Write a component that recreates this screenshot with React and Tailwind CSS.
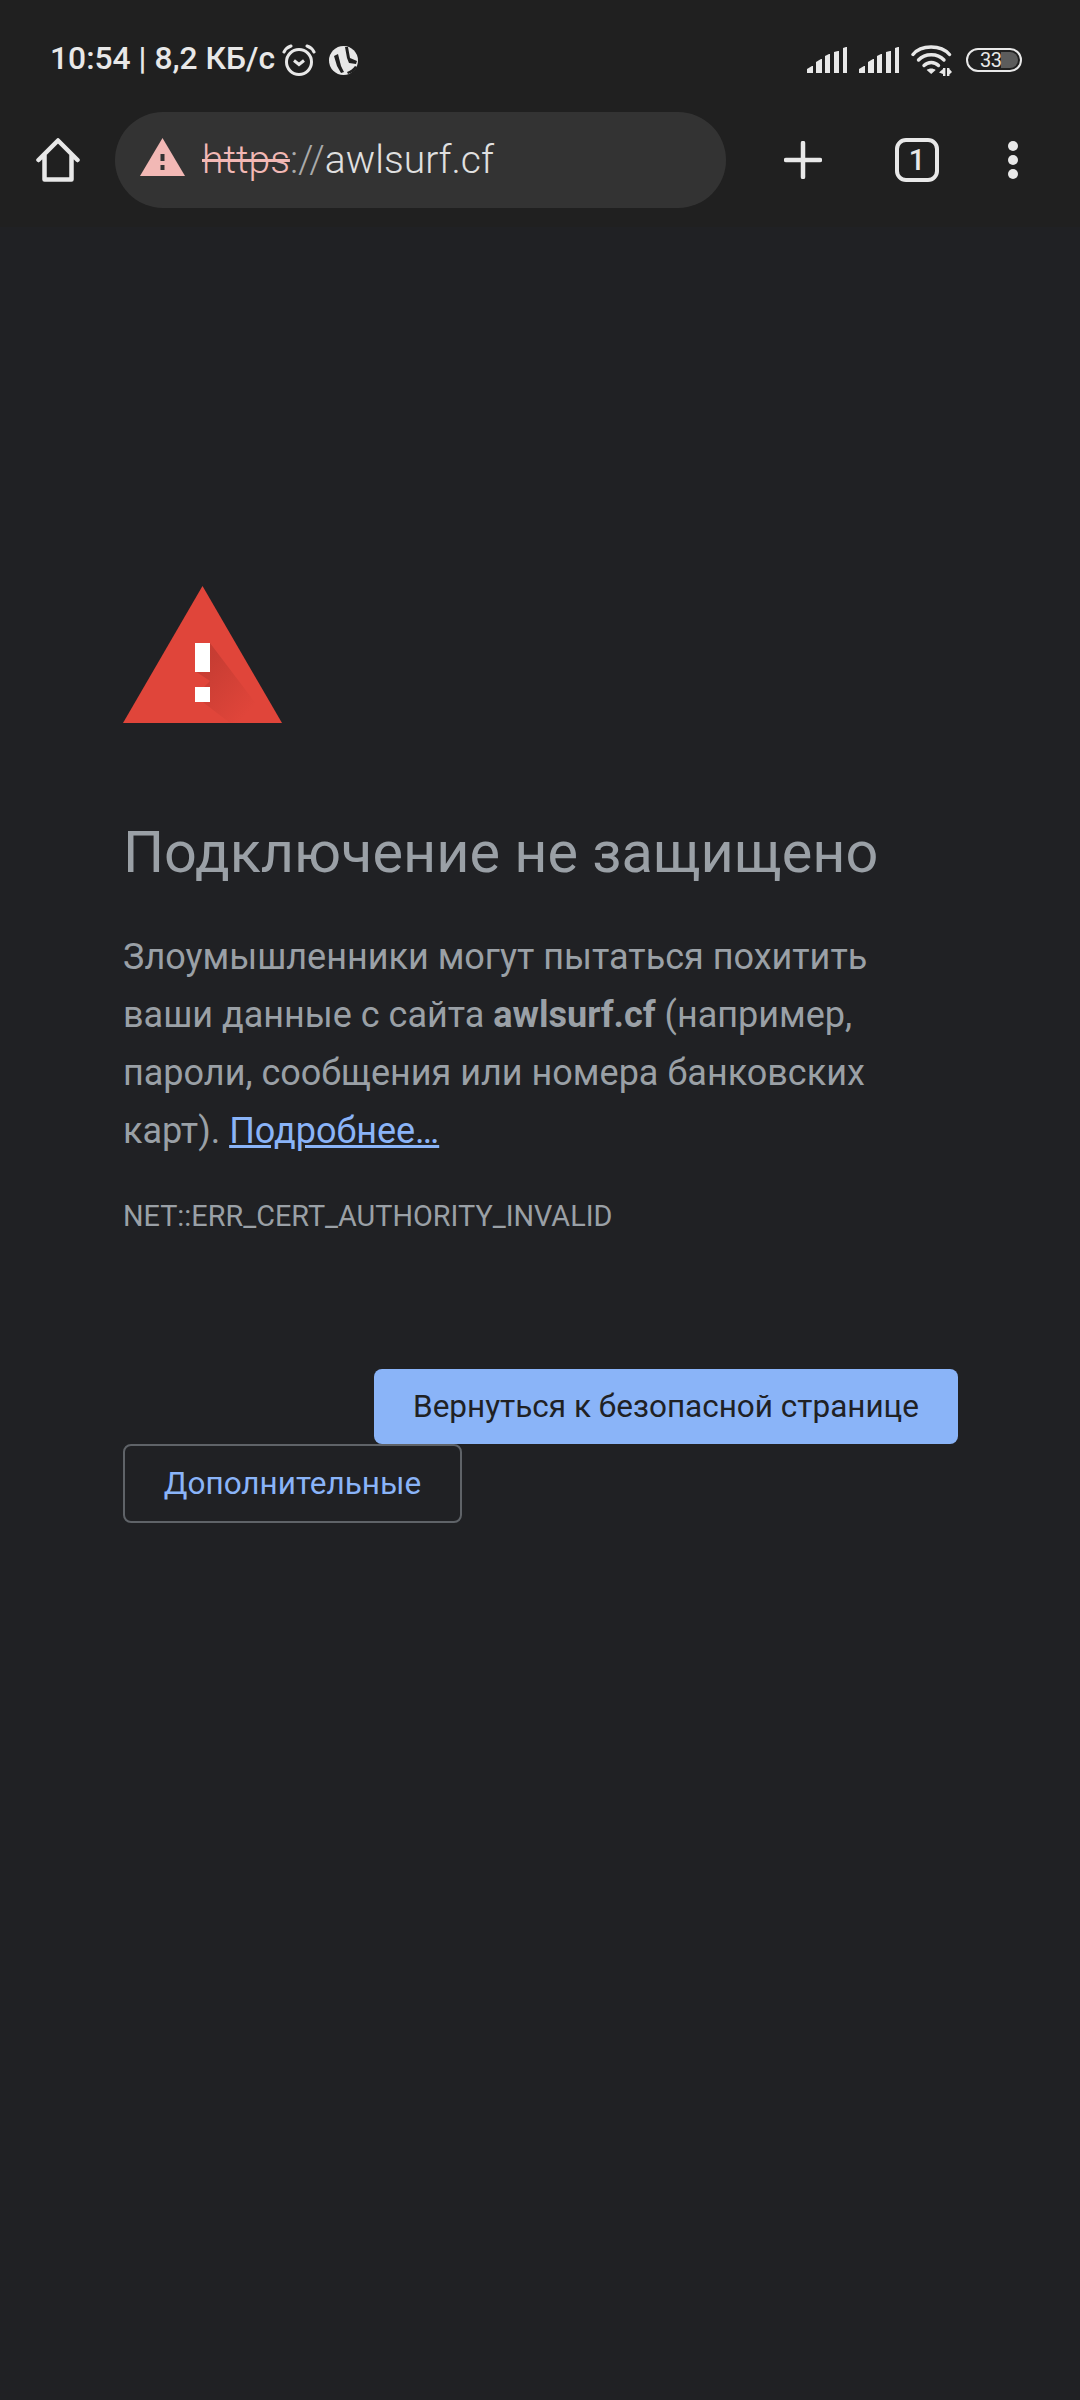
import React from "react";

const font = { fontFamily: "Roboto, sans-serif" };

function SignalIcon() {
  return (
    <svg width="40" height="26" viewBox="0 0 40 26" fill="#e8e8e8" className="block">
      <path d="M0 26v-4l5-3h1v7z" />
      <path d="M9 26V15l5-3h1v14z" />
      <path d="M18 26V9l4-2h1v19z" />
      <path d="M27 26V5l4-1h1v22z" />
      <path d="M36 26V1l3-1h1v26z" />
    </svg>
  );
}

function WifiIcon() {
  return (
    <svg width="41" height="31" viewBox="0 0 41 31" fill="none" className="block">
      <g stroke="#e8e8e8" strokeWidth="3.4" strokeLinecap="round">
        <path d="M2 9.5C10 -0.5 30 -0.5 38.5 9.5" />
        <path d="M7.5 15C14 8 26.5 8 33 15" />
        <path d="M13 20.5C17 16.5 23.5 16.5 27.5 20.5" />
      </g>
      <path d="M20.2 29l-4.5-4c2.5-2 6.5-2 9 0z" fill="#e8e8e8" />
      <path d="M32 23h2.4v8H32zM28 27.5l4-3.5v5zM36 23h2.4v8H36zM38.4 24l2.600 3-2.600 2.500z" fill="#e8e8e8" />
    </svg>
  );
}

function AlarmIcon() {
  return (
    <svg width="34" height="32" viewBox="0 0 34 32" fill="none" stroke="#e8e8e8" className="block">
      <circle cx="17" cy="18" r="12.5" strokeWidth="3" />
      <path d="M12 16.5l5 4 5-4" strokeWidth="3" />
      <path d="M2 8C3.500 5 6 3 9 2M32 8C30.500 5 28 3 25 2" strokeWidth="3" strokeLinecap="round" />
    </svg>
  );
}

function TorrentIcon() {
  return (
    <svg width="29" height="29" viewBox="0 0 29 29" className="block">
      <circle cx="14.500" cy="14.500" r="14.500" fill="#e8e8e8" />
      <path d="M5 10l4-2 3 12 3 6-3 1-4-7z" fill="#202020" />
      <path d="M16 1h3l2 11 7 3-1 3-7-1-2-5z" fill="#202020" />
      <path d="M26 20l2 1c-2 4-5 6-9 7l-1-2c3-1 6-3 8-6z" fill="#202020" />
    </svg>
  );
}

function StatusBar() {
  return (
    <div className="h-[112px] pt-[42px] pl-[50px] pr-[58px] flex items-start justify-between">
      <div className="flex items-center h-[36px] text-[31.8px] font-medium text-[#e8e8e8] leading-none">
        <span className="-mt-[2px]">10:54 | 8,2 КБ/с</span>
        <span className="ml-[7px] flex -mt-[1px]"><AlarmIcon /></span>
        <span className="ml-[13px] flex"><TorrentIcon /></span>
      </div>
      <div className="flex items-center h-[36px]">
        <SignalIcon />
        <span className="ml-[12px] flex"><SignalIcon /></span>
        <span className="ml-[12px] flex"><WifiIcon /></span>
        <div className="ml-[14px] w-[56px] h-[24px] rounded-full border-2 border-[#e8e8e8] relative flex items-center overflow-hidden">
          <span className="absolute right-[2px] top-[2px] bottom-[2px] w-[17px] bg-[#5c5c5c] rounded-r-full" />
          <span className="relative ml-[12px] text-[20px] leading-none tracking-[-0.5px] text-[#e8e8e8]">33</span>
        </div>
      </div>
    </div>
  );
}

function Toolbar() {
  return (
    <div className="h-[115px] flex items-start">
      <div className="w-[115px] h-[96px] flex items-center justify-center">
        <svg width="44" height="44" viewBox="0 0 44 44" fill="none" stroke="#e8e8e8" strokeWidth="4.5" strokeLinejoin="round" strokeLinecap="round">
          <path d="M2.500 22L22 2.500 41.500 22M8.500 17V41.500H35.500V17" />
        </svg>
      </div>
      <div className="w-[611px] h-[96px] rounded-full bg-[#333333] flex items-center pl-[25px]">
        <svg width="45" height="38" viewBox="0 0 45 38" className="shrink-0 -mt-[6px]">
          <path d="M22.500 0L45 38H0z" fill="#f2b8b5" />
          <rect x="20.500" y="16" width="4" height="7" fill="#333333" />
          <rect x="20.500" y="27" width="4" height="5" fill="#333333" />
        </svg>
        <span className="ml-[17px] text-[39px] leading-none font-[350] text-[#e0e0e0]">
          <span className="text-[#f2b8b5] line-through">https</span>
          <span className="text-[#aaaaaa]">://</span>awlsurf.cf
        </span>
      </div>
      <div className="h-[96px] flex items-center">
        <svg width="38" height="38" viewBox="0 0 38 38" className="ml-[58px]" stroke="#e8e8e8" strokeWidth="4.5" strokeLinecap="round">
          <path d="M19 2v34M2 19h34" />
        </svg>
        <div className="ml-[73px] w-[44px] h-[44px] rounded-[11px] border-[4.5px] border-[#e8e8e8] flex items-center justify-center text-[29px] font-medium leading-none text-[#e8e8e8]">
          1
        </div>
        <div className="ml-[69px] flex flex-col gap-[4px]">
          <span className="block w-[10px] h-[10px] rounded-full bg-[#e8e8e8]" />
          <span className="block w-[10px] h-[10px] rounded-full bg-[#e8e8e8]" />
          <span className="block w-[10px] h-[10px] rounded-full bg-[#e8e8e8]" />
        </div>
      </div>
    </div>
  );
}

function WarningIcon() {
  return (
    <svg width="159" height="137" viewBox="0 0 159 137" className="block">
      <defs>
        <linearGradient id="markShadow" x1="0.2" y1="0.2" x2="0.8" y2="0.8">
          <stop offset="0" stopColor="#a8322a" stopOpacity="0.45" />
          <stop offset="1" stopColor="#a8322a" stopOpacity="0" />
        </linearGradient>
      </defs>
      <path d="M79.500 0L159 137H0z" fill="#e0453a" />
      <path d="M87 57l50 66 8 14H107L72 110l15-15-15-10z" fill="url(#markShadow)" />
      <rect x="72" y="57" width="15" height="29" fill="#ffffff" />
      <rect x="72" y="101" width="15" height="15" fill="#ffffff" />
    </svg>
  );
}

export default function App() {
  return (
    <div className="w-[1080px] h-[2400px] bg-[#202124] overflow-hidden" style={font}>
      <div className="bg-[#202020]">
        <StatusBar />
        <Toolbar />
      </div>
      <div className="pl-[123px] pr-[120px] pt-[359px]">
        <WarningIcon />
        <h1 className="mt-[96px] text-[57.6px] leading-[68px] font-normal text-[#9aa0a6] whitespace-nowrap">Подключение не защищено</h1>
        <p className="mt-[41px] text-[36px] leading-[58px] text-[#9aa0a6]">
          Злоумышленники могут пытаться похитить ваши данные с сайта <b className="font-bold">awlsurf.cf</b> (например, пароли, сообщения или номера банковских карт).{" "}
          <span className="text-[#8ab4f8] underline">Подробнее…</span>
        </p>
        <p className="mt-[36px] text-[28.8px] leading-[40px] text-[#9aa0a6]">NET::ERR_CERT_AUTHORITY_INVALID</p>
        <div className="mt-[133px] flex justify-end">
          <button className="mr-[2px] w-[584px] h-[75px] rounded-[8px] bg-[#8ab4f8] text-[31.5px] text-[#202124]">Вернуться к безопасной странице</button>
        </div>
        <button className="block w-[339px] h-[79px] rounded-[8px] border-2 border-[#5f6368] text-[31.5px] text-[#8ab4f8]">Дополнительные</button>
      </div>
    </div>
  );
}
